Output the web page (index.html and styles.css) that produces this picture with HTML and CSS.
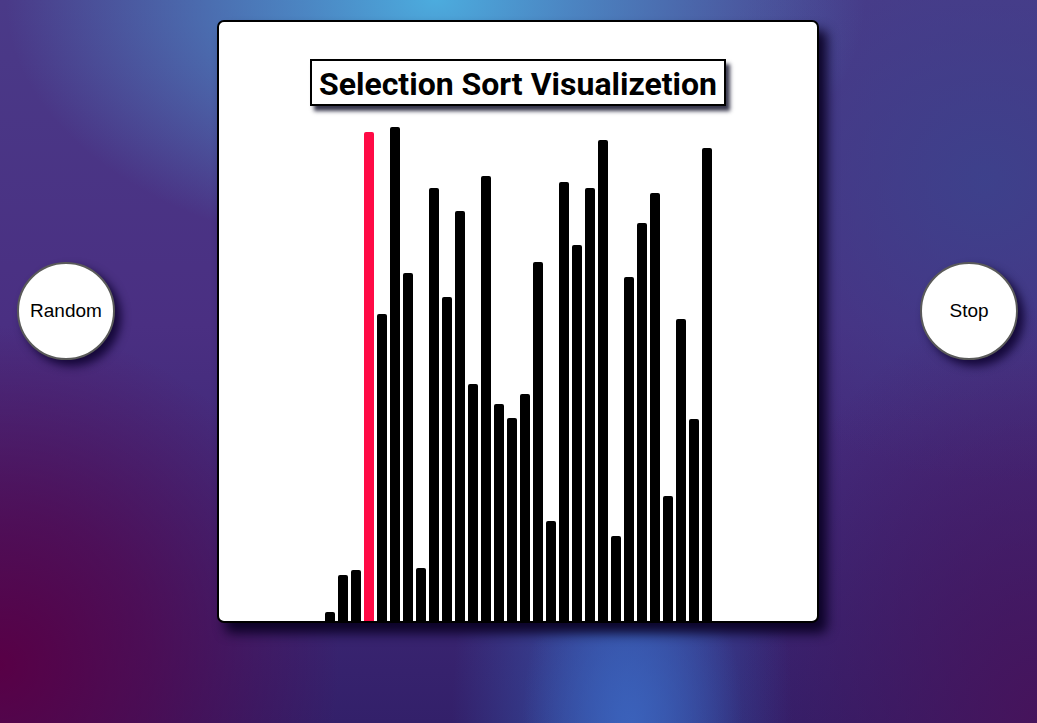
FILE: index.html
```html
<!DOCTYPE html>
<html lang="en">
<head>
<meta charset="utf-8">
<title>Selection Sort Visualizetion</title>
<link rel="stylesheet" href="styles.css">
</head>
<body>
<main class="stage">
  <button class="round-btn btn-left">Random</button>
  <section class="card">
    <h1 class="title">Selection Sort Visualizetion</h1>
    <div class="bars">
      <div class="bar" style="height:9px"></div>
      <div class="bar" style="height:46px"></div>
      <div class="bar" style="height:51px"></div>
      <div class="bar bar-active" style="height:489px"></div>
      <div class="bar" style="height:307px"></div>
      <div class="bar" style="height:494px"></div>
      <div class="bar" style="height:348px"></div>
      <div class="bar" style="height:53px"></div>
      <div class="bar" style="height:433px"></div>
      <div class="bar" style="height:324px"></div>
      <div class="bar" style="height:410px"></div>
      <div class="bar" style="height:237px"></div>
      <div class="bar" style="height:445px"></div>
      <div class="bar" style="height:217px"></div>
      <div class="bar" style="height:203px"></div>
      <div class="bar" style="height:227px"></div>
      <div class="bar" style="height:359px"></div>
      <div class="bar" style="height:100px"></div>
      <div class="bar" style="height:439px"></div>
      <div class="bar" style="height:376px"></div>
      <div class="bar" style="height:433px"></div>
      <div class="bar" style="height:481px"></div>
      <div class="bar" style="height:85px"></div>
      <div class="bar" style="height:344px"></div>
      <div class="bar" style="height:398px"></div>
      <div class="bar" style="height:428px"></div>
      <div class="bar" style="height:125px"></div>
      <div class="bar" style="height:302px"></div>
      <div class="bar" style="height:202px"></div>
      <div class="bar" style="height:473px"></div>
    </div>
  </section>
  <button class="round-btn btn-right">Stop</button>
</main>
</body>
</html>
```

FILE: styles.css
```css
html, body {
  margin: 0;
  padding: 0;
  height: 100%;
}

body {
  overflow: hidden;
  background:
    radial-gradient(ellipse 110px 200px at 61% 100%, rgba(60, 100, 190, 0.85) 0%, rgba(60, 100, 190, 0) 100%),
    radial-gradient(ellipse 170px 420px at 60% 100%, rgba(52, 90, 176, 0.9) 0%, rgba(52, 90, 176, 0.45) 50%, rgba(52, 90, 176, 0) 100%),
    radial-gradient(ellipse 430px 260px at 42% 0%, rgba(76, 172, 222, 1) 0%, rgba(76, 160, 215, 0.75) 30%, rgba(76, 140, 200, 0) 100%),
    radial-gradient(ellipse 340px 340px at 0% 92%, rgba(88, 0, 70, 1) 0%, rgba(88, 0, 70, 0.6) 45%, rgba(88, 0, 70, 0) 100%),
    radial-gradient(ellipse 300px 420px at 100% 100%, rgba(72, 18, 90, 0.9) 0%, rgba(72, 18, 90, 0) 100%),
    radial-gradient(ellipse 300px 300px at 95% 25%, rgba(60, 66, 140, 0.9) 0%, rgba(60, 66, 140, 0) 100%),
    linear-gradient(180deg, #4a3a88 0%, #4a2f82 45%, #33206a 100%);
  font-family: "Liberation Sans", Arial, sans-serif;
}

.stage {
  display: grid;
  grid-template-columns: 1fr auto 1fr;
  align-items: start;
  padding: 20px 18px 0 17px;
}

.round-btn {
  width: 98px;
  height: 98px;
  margin-top: 242px;
  border-radius: 50%;
  border: 2px solid #5a5a5a;
  background: #ffffff;
  color: #000000;
  font-family: "Liberation Sans", Arial, sans-serif;
  font-size: 19px;
  padding: 0;
  box-shadow: 6px 6px 10px rgba(12, 0, 45, 0.85);
  cursor: pointer;
}

.btn-left { justify-self: start; }
.btn-right { justify-self: end; margin-right: 1px; }

.card {
  width: 598px;
  height: 599px;
  background: #ffffff;
  border: 2px solid #000000;
  border-radius: 7px;
  box-shadow: 8px 10px 12px rgba(10, 0, 35, 0.95);
  display: flex;
  flex-direction: column;
  align-items: center;
}

.title {
  margin: 37px 0 0 0;
  padding: 0 7px;
  height: 43px;
  line-height: 46px;
  border: 2px solid #000000;
  box-shadow: 4px 5px 4px rgba(20, 20, 45, 0.85);
  font-family: Roboto, "DejaVu Sans", sans-serif;
  font-weight: 700;
  font-size: 32px;
  letter-spacing: 0;
  color: #000000;
  white-space: nowrap;
}

.bars {
  flex: 1;
  align-self: stretch;
  display: flex;
  align-items: flex-end;
  justify-content: center;
  gap: 3px;
}

.bar {
  width: 10px;
  background: #000000;
  border-radius: 2px 2px 0 0;
}

.bar-active {
  background: #ff0a45;
}
```
